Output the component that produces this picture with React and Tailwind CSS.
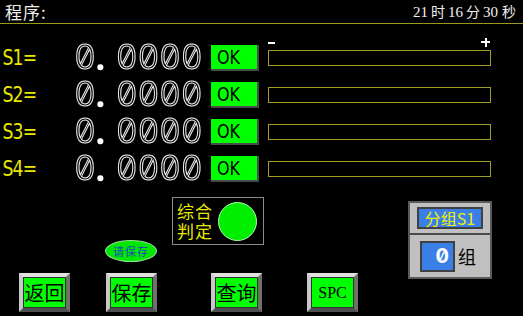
import React from "react";

const rows = ["S1=", "S2=", "S3=", "S4="];

function Bevel({ children, className = "" }) {
  return (
    <div
      className={
        "w-[51px] h-[39px] border-[4px] border-t-[#e0e0e0] border-l-[#c8c8c8] border-b-[#505050] border-r-[#707070] flex " +
        className
      }
    >
      <div className="flex-1 bg-[#00ff00] border border-[#303030] flex items-center justify-center text-black">
        {children}
      </div>
    </div>
  );
}

export default function App() {
  const cjk = { fontFamily: '"Noto Sans CJK SC", sans-serif' };
  return (
    <div className="w-[523px] h-[316px] bg-black overflow-hidden flex flex-col" style={{ fontFamily: '"Liberation Sans", "Noto Sans CJK SC", sans-serif' }}>
      {/* header */}
      <div className="h-[24px] border-b border-[#9a9a22] flex items-center justify-between pl-[5px] pr-[7px]">
        <span className="text-[17px] text-[#f0f0f0] leading-none tracking-[1px]" style={cjk}>程序:</span>
        <span className="text-[15px] text-[#f0f0f0] leading-none pt-[1px]" style={{ fontFamily: '"Liberation Serif", "Noto Sans CJK SC", serif' }}>
          21<span className="text-[14px] mx-[3px]" style={cjk}>时</span>16<span className="text-[14px] mx-[3px]" style={cjk}>分</span>30<span className="text-[14px] ml-[4px]" style={cjk}>秒</span>
        </span>
      </div>

      {/* minus / plus */}
      <div className="h-[21px] flex items-end">
        <div className="ml-[268px] w-[223px] h-[10px] -mb-[2px] flex items-center justify-between text-white">
          <span className="w-[7px] h-[2px] bg-white mt-[2px]"></span>
          <span className="relative w-[9px] h-[9px] mr-[1px] flex items-center justify-center">
            <span className="absolute w-[9px] h-[2px] bg-white"></span>
            <span className="absolute w-[2px] h-[9px] bg-white"></span>
          </span>
        </div>
      </div>

      {/* rows */}
      <div className="flex flex-col">
        {rows.map((r) => (
          <div key={r} className="h-[37px] flex items-start">
            <span className="w-[74px] pl-[3px] pt-[1px] text-[21px] leading-[24px] text-[#e8e800] tracking-[-1px]" style={{ fontFamily: '"DejaVu Sans", sans-serif', transform: "scaleX(0.82)", transformOrigin: "left" }}>
              {r}
            </span>
            <div className="w-[137px] h-[28px] -mt-[2px]">
              <span
                className="block whitespace-nowrap text-[34px] leading-[28px] text-black will-change-transform"
                style={{ fontFamily: 'Inter, monospace', fontFeatureSettings: '"zero" 1, "tnum" 1', WebkitTextStroke: "1px #ececec", letterSpacing: "-0.3px", fontWeight: 300 }}
              >
                0<span className="inline-block w-[20px] text-white" style={{ WebkitTextStroke: "2.5px #ffffff" }}>.</span>0000
              </span>
            </div>
            <div className="w-[48px] h-[26px] bg-[#00ff00] border-r-2 border-b-2 border-[#4a4a4a] flex items-center pl-[6px] text-black text-[20px] leading-none" style={{ fontFamily: '"DejaVu Sans", sans-serif' }}>
              <span style={{ display: "inline-block", transform: "scaleX(0.8)", transformOrigin: "left" }}>OK</span>
            </div>
            <div className="ml-[9px] mt-[5px] w-[223px] h-[16px] border border-[#a0a024]"></div>
          </div>
        ))}
      </div>

      {/* bottom */}
      <div className="flex">
        <div className="w-[408px] flex flex-col">
          <div className="h-[80px] flex items-start">
            <div className="ml-[105px] mt-[47px] w-[52px] h-[22px] rounded-[50%] bg-[#00e800] border border-[#9adf9a] flex items-center justify-center text-[11px] text-[#2040c8] leading-none tracking-[1px]" style={cjk}>
              请保存
            </div>
            <div className="ml-[15px] mt-[4px] w-[92px] h-[48px] border border-[#8a8a8a] flex items-center">
              <div className="ml-[4px] text-[17px] leading-[20px] text-[#e8e800] tracking-[1px]" style={cjk}>
                综合<br />判定
              </div>
              <div className="ml-[5px] w-[39px] h-[39px] rounded-full bg-[#00ee00] border border-[#b0ffb0]"></div>
            </div>
          </div>
          <div className="flex">
            <Bevel className="ml-[19px]"><span className="text-[20px] leading-none" style={cjk}>返回</span></Bevel>
            <Bevel className="ml-[36px]"><span className="text-[20px] leading-none" style={cjk}>保存</span></Bevel>
            <Bevel className="ml-[54px]"><span className="text-[20px] leading-none" style={cjk}>查询</span></Bevel>
            <Bevel className="ml-[45px]"><span className="text-[16px] leading-none" style={{ fontFamily: '"Liberation Serif", serif' }}>SPC</span></Bevel>
          </div>
        </div>
        <div className="mt-[8px] w-[84px] h-[78px] bg-[#c0c0c0] border-2 border-[#5a5a5a] flex flex-col">
          <div className="h-[32px] border-b-2 border-[#4a4a4a] flex items-center justify-center">
            <div className="w-[66px] h-[22px] bg-[#3a7fe8] border-2 border-[#404040] flex items-center justify-center text-[16px] leading-none text-[#f0f000]" style={cjk}>
              分组S1
            </div>
          </div>
          <div className="flex-1 flex items-center pl-[10px]">
            <div className="w-[35px] h-[31px] bg-[#3a7fe8] border-2 border-[#404040] flex items-center justify-end pr-[4px] text-white text-[20px] font-bold leading-none" style={{ fontFamily: 'Inter, monospace', fontFeatureSettings: '"zero" 1' }}>
              0
            </div>
            <span className="ml-[3px] text-[18px] text-black leading-none" style={cjk}>组</span>
          </div>
        </div>
      </div>
    </div>
  );
}
